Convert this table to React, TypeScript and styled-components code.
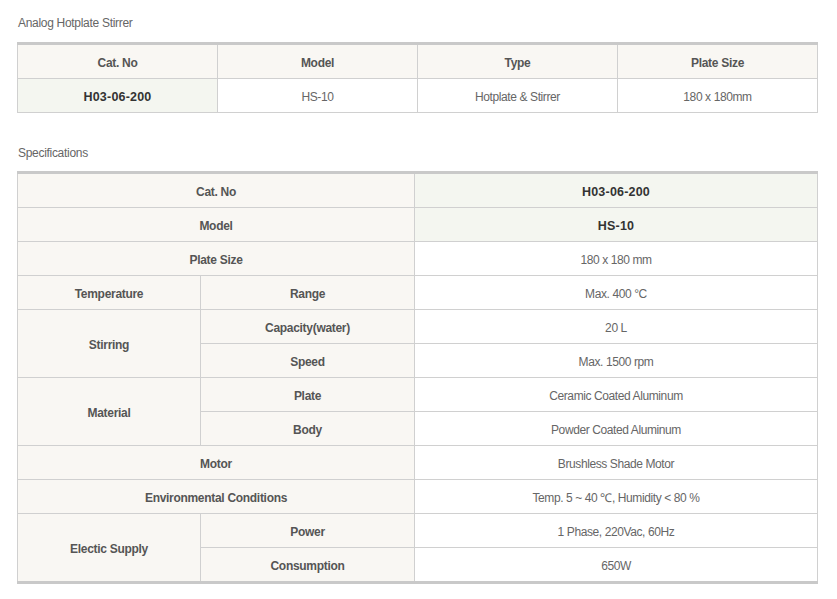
import React from "react";
import styled, { createGlobalStyle } from "styled-components";

const Global = createGlobalStyle`
  html, body { margin: 0; padding: 0; background: #ffffff; }
  body { font-family: "Liberation Sans", Arial, sans-serif; }
`;

const Page = styled.div`
  width: 837px;
  padding: 0 0 0 17px;
  box-sizing: border-box;
`;

const Title = styled.h2<{ $top: number }>`
  margin: ${(p) => p.$top}px 0 0 1px;
  height: 16px;
  line-height: 16px;
  font-size: 12px;
  font-weight: normal;
  color: #666;
  letter-spacing: -0.3px;
  font-family: "Liberation Sans", Arial, sans-serif;
`;

const Table = styled.table<{ $top: number; $bottom: number }>`
  margin-top: ${(p) => p.$top}px;
  width: 801px;
  border-collapse: collapse;
  table-layout: fixed;
  border-top: 3px solid #c9c9c9;
  border-bottom: ${(p) => p.$bottom}px solid #c9c9c9;
`;

const Cell = styled.td<{ $kind: "head" | "code" | "value" }>`
  height: 31px;
  padding: 2px 0 0 0;
  border: 1px solid #d0d0d0;
  text-align: center;
  vertical-align: middle;
  background: ${(p) =>
    p.$kind === "head" ? "#f9f7f3" : p.$kind === "code" ? "#f4f6f0" : "#ffffff"};
  color: ${(p) => (p.$kind === "head" ? "#555" : p.$kind === "code" ? "#333" : "#666")};
  font-weight: ${(p) => (p.$kind === "value" ? "normal" : "bold")};
  letter-spacing: ${(p) => (p.$kind === "head" ? "-0.3px" : p.$kind === "code" ? "0.2px" : "-0.4px")};
  font-size: ${(p) => (p.$kind === "code" ? "12.5px" : "12px")};
`;

const specRows: Array<
  | { label: string; value: string; kind?: "code" }
  | { group: string; items: Array<{ label: string; value: string }> }
> = [
  { label: "Cat. No", value: "H03-06-200", kind: "code" },
  { label: "Model", value: "HS-10", kind: "code" },
  { label: "Plate Size", value: "180 x 180 mm" },
  { group: "Temperature", items: [{ label: "Range", value: "Max. 400 °C" }] },
  {
    group: "Stirring",
    items: [
      { label: "Capacity(water)", value: "20 L" },
      { label: "Speed", value: "Max. 1500 rpm" },
    ],
  },
  {
    group: "Material",
    items: [
      { label: "Plate", value: "Ceramic Coated Aluminum" },
      { label: "Body", value: "Powder Coated Aluminum" },
    ],
  },
  { label: "Motor", value: "Brushless Shade Motor" },
  { label: "Environmental Conditions", value: "Temp. 5 ~ 40 ℃, Humidity < 80 %" },
  {
    group: "Electic Supply",
    items: [
      { label: "Power", value: "1 Phase, 220Vac, 60Hz" },
      { label: "Consumption", value: "650W" },
    ],
  },
];

export default function App() {
  return (
    <>
      <Global />
      <Page>
        <Title $top={15}>Analog Hotplate Stirrer</Title>
        <Table $top={11} $bottom={1}>
          <colgroup>
            <col style={{ width: 200 }} />
            <col style={{ width: 200 }} />
            <col style={{ width: 200 }} />
            <col style={{ width: 200 }} />
          </colgroup>
          <tbody>
            <tr>
              <Cell as="th" $kind="head">Cat. No</Cell>
              <Cell as="th" $kind="head">Model</Cell>
              <Cell as="th" $kind="head">Type</Cell>
              <Cell as="th" $kind="head">Plate Size</Cell>
            </tr>
            <tr>
              <Cell $kind="code">H03-06-200</Cell>
              <Cell $kind="value">HS-10</Cell>
              <Cell $kind="value">Hotplate &amp; Stirrer</Cell>
              <Cell $kind="value">180 x 180mm</Cell>
            </tr>
          </tbody>
        </Table>

        <Title $top={32}>Specifications</Title>
        <Table $top={10} $bottom={3}>
          <colgroup>
            <col style={{ width: 183 }} />
            <col style={{ width: 214 }} />
            <col style={{ width: 403 }} />
          </colgroup>
          <tbody>
            {specRows.map((r, i) => {
              if ("group" in r) {
                return r.items.map((it, j) => (
                  <tr key={`${i}-${j}`}>
                    {j === 0 && (
                      <Cell as="th" $kind="head" rowSpan={r.items.length}>
                        {r.group}
                      </Cell>
                    )}
                    <Cell as="th" $kind="head">{it.label}</Cell>
                    <Cell $kind="value">{it.value}</Cell>
                  </tr>
                ));
              }
              return (
                <tr key={i}>
                  <Cell as="th" $kind="head" colSpan={2}>
                    {r.label}
                  </Cell>
                  <Cell $kind={r.kind === "code" ? "code" : "value"}>{r.value}</Cell>
                </tr>
              );
            })}
          </tbody>
        </Table>
      </Page>
    </>
  );
}
